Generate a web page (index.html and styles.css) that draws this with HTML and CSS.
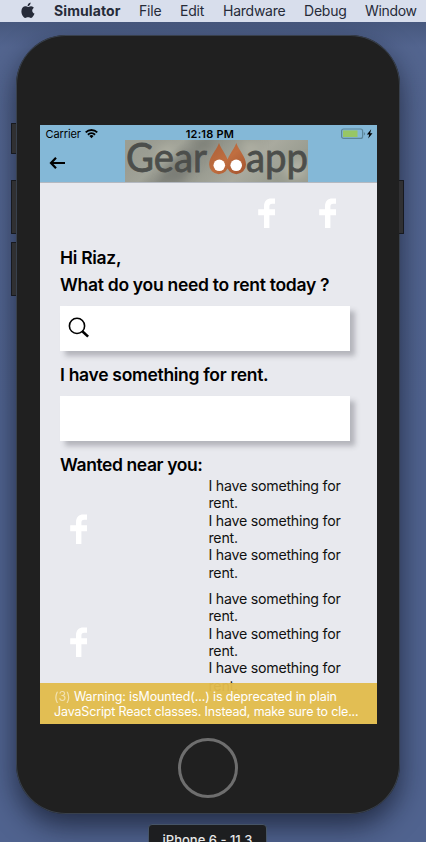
FILE: index.html
```html
<!DOCTYPE html>
<html lang="en">
<head>
<meta charset="utf-8">
<title>Simulator</title>
<link rel="stylesheet" href="styles.css">
</head>
<body>
<svg class="defs" width="0" height="0"><defs>
<symbol id="fb" viewBox="0 0 17 30"><path d="M6 30V17.200H.2v-5.900H6V8.400C6 3.200 9 .6 13.200.6H17v5.200h-2.700c-2.200 0-2.900 1-2.900 2.900v2.600H17v5.900h-5.600V30z" fill="#fff"/></symbol>
</defs></svg>
<nav class="menubar">
<svg class="apple" viewBox="0 0 14 17"><path d="M9.600.5C9.800 2.400 8.200 4.200 6.600 4.200 6.300 2.500 7.900.8 9.600.5zM6.900 5c.7 0 1.700-.9 3.300-.8 1.200.1 2.100.6 2.700 1.500-2.500 1.600-2 4.900.6 5.900-.6 1.800-2 4.300-3.500 4.300-1.100 0-1.500-.7-2.900-.7s-1.800.7-2.900.7C2.500 15.900.4 12.500.4 9.300c0-3.200 2-5 4-5 1.100 0 1.900.7 2.500.7z" fill="#262b39"/></svg>
<span class="m app">Simulator</span><span class="m file">File</span><span class="m edit">Edit</span><span class="m hw">Hardware</span><span class="m debug">Debug</span><span class="m win">Window</span>
</nav>
<main class="desktop">
<div class="phone">
<i class="key k1"></i><i class="key k2"></i><i class="key k3"></i><i class="key k4"></i>
<div class="screen">
<header class="header">
<div class="status">
<span class="carrier">Carrier</span>
<svg class="wifi" viewBox="0 0 13 9.500"><g fill="none" stroke="#000" stroke-width="1.900"><path d="M.7 3.400a8.300 8.300 0 0 1 11.600 0"/><path d="M2.900 5.700a5.200 5.200 0 0 1 7.200 0"/></g><path d="M4.400 7.100a3 3 0 0 1 4.200 0L6.500 9.200z"/></svg>
<span class="time">12:18 PM</span>
<svg class="battery" viewBox="0 0 33 12"><rect x=".6" y="1" width="21" height="9.400" rx="2" fill="none" stroke="#5c8599" stroke-width="1.200"/><rect x="2" y="2.400" width="14.500" height="6.600" fill="#97c665"/><path d="M22.800 4a1.900 1.900 0 0 1 0 3.600z" fill="#5c8599"/><path d="M30.200 1.200l-4.300 5.200h2.400l-1.100 4 4.300-5.200h-2.400z"/></svg>
</div>
<div class="nav">
<svg class="back" viewBox="0 0 17 14"><path d="M7 1.800L2 7l5 5.200M2 7h14" fill="none" stroke="#000" stroke-width="2.200"/></svg>
<svg class="logo" viewBox="0 0 183 42"><defs>
<linearGradient id="st" x2="1" y2=".25"><stop stop-color="#9c9e92"/><stop offset=".15" stop-color="#9a9c92"/><stop offset=".3" stop-color="#a1a398"/><stop offset=".42" stop-color="#868880"/><stop offset=".6" stop-color="#9b9d92"/><stop offset=".78" stop-color="#a9aa9f"/><stop offset="1" stop-color="#999c90"/></linearGradient>
<filter id="soft" x="-20%" y="-20%" width="140%" height="140%"><feGaussianBlur stdDeviation="4"/></filter>
<linearGradient id="drop" x2="1" y2="1"><stop stop-color="#a95f38"/><stop offset=".5" stop-color="#c06e40"/><stop offset="1" stop-color="#a3532e"/></linearGradient></defs>
<rect width="183" height="42" fill="url(#st)"/>
<g filter="url(#soft)"><path d="M34 42L48 22l14-10 10 8-16 22z" fill="#7b7e77"/><path d="M118 2l18 4-14 12zM155 26l24-8 3 18-16 4zM30 10l20-6-6 16z" fill="#b0b1a4"/><path d="M62 0h28L80 11z" fill="#7f8279"/></g>
<g class="word"><text x="1" y="32" textLength="81" lengthAdjust="spacingAndGlyphs">Gear</text><text x="121" y="32" textLength="62" lengthAdjust="spacingAndGlyphs">app</text></g>
<path d="M94 3c3 8 9.500 14 9.500 21.500a9.700 9.700 0 0 1-19.400 0C84.100 17 91 11 94 3zM111.300 3c3 8 9.700 14 9.700 21.500a9.700 9.700 0 0 1-19.400 0C101.600 17 108.300 11 111.300 3z" fill="url(#drop)"/><circle cx="94.300" cy="25.300" r="5.800" fill="#fff"/><circle cx="111.200" cy="25.300" r="5.800" fill="#fff"/></svg>
</div>
</header>
<div class="social"><svg class="fb"><use href="#fb"/></svg><svg class="fb"><use href="#fb"/></svg></div>
<section class="body">
<h2><span class="h1">Hi Riaz,</span></h2>
<h2><span class="h2">What do you need to rent today ?</span></h2>
<div class="box"><svg class="search" viewBox="0 0 22 22"><circle cx="9" cy="8.900" r="7.600" fill="none" stroke="#000" stroke-width="1.600"/><path d="M14.300 14.300l5.800 5.300" stroke="#000" stroke-width="2.600"/></svg></div>
<h2><span class="h3">I have something for rent.</span></h2>
<div class="box"></div>
<h2 class="last"><span class="h4">Wanted near you:</span></h2>
<div class="item"><svg class="fb"><use href="#fb"/></svg><div class="copy"><p>I have something for<br>rent.</p><p>I have something for<br>rent.</p><p>I have something for<br>rent.</p></div></div>
<div class="item"><svg class="fb"><use href="#fb"/></svg><div class="copy"><p>I have something for<br>rent.</p><p>I have something for<br>rent.</p><p>I have something for<br>rent.</p></div></div>
</section>
<div class="warning"><div class="w1"><span class="count">(3)</span> Warning: isMounted(...) is deprecated in plain</div><div class="w2">JavaScript React classes. Instead, make sure to cle...</div></div>
</div>
<div class="home"></div>
</div>
<div class="device">iPhone 6 - 11.3</div>
</main>
</body>
</html>
```
FILE: styles.css
```css
* { box-sizing: border-box; }
body { margin: 0; width: 426px; height: 842px; overflow: hidden; font-family: Inter, "Liberation Sans", sans-serif; color: #000; background: #50638f; }
.defs { position: absolute; }
.menubar { height: 22px; background: #d8deec; display: flex; align-items: center; font-size: 14px; color: #262b39; white-space: nowrap; padding-left: 21px; }
.apple { width: 14px; height: 17px; flex: none; margin: 0 19px 1px 0; }
.m { flex: none; line-height: 22px; letter-spacing: -.2px; }
.app { font-weight: 700; width: 85px; letter-spacing: .1px; }
.file { width: 41px; }
.edit { width: 43px; }
.hw { width: 81px; letter-spacing: -.25px; }
.debug { width: 61px; }
.win { letter-spacing: -.35px; }
.desktop { height: 820px; padding-top: 13px; overflow: hidden; background: linear-gradient(#47587e, #53658f 25px, #50638f 400px, #50638f); }
.phone { position: relative; width: 384px; height: 778.500px; margin-left: 16px; padding: 90px 0 0 24px; border-radius: 50px; background: #202020; box-shadow: 0 0 0 1px #38404c inset, 0 12px 28px rgba(10, 15, 30, .65); }
.key { position: absolute; width: 5px; background: #303032; border: 1px solid #17191e; border-right: 0; left: -5px; height: 54px; border-radius: 1px 0 0 1px; }
.k1 { top: 88px; height: 31px; }
.k2 { top: 145px; }
.k3 { top: 207px; }
.k4 { top: 145px; left: 383px; width: 5px; border: 1px solid #17191e; border-left: 0; border-radius: 0 1px 1px 0; }
.screen { position: relative; width: 337px; height: 599px; background: #e8e9ee; overflow: hidden; }
.header { height: 58px; background: #84b8d7; border-bottom: 1px solid #b4b9c1; }
.status { height: 15px; display: flex; align-items: center; font-size: 11px; line-height: 18px; padding: 3px 3px 0 5.500px; white-space: nowrap; }
.carrier { width: 40px; letter-spacing: -.1px; }
.wifi { width: 13px; height: 9.500px; }
.time { font-weight: 600; width: 156px; margin-left: 87.500px; letter-spacing: .2px; }
.battery { width: 33px; height: 12px; flex: none; }
.nav { height: 42px; display: flex; align-items: center; padding-left: 9px; }
.back { width: 17px; height: 14px; margin: 3px 59px 0 0; }
.logo { width: 183px; height: 42px; display: block; }
.word { font-family: Lato, sans-serif; font-weight: 400; font-size: 41px; fill: #4c4e4b; stroke: #4c4e4b; stroke-width: .8px; }
.social { height: 62px; padding: 15px 41px 0 0; display: flex; justify-content: flex-end; gap: 44px; }
.fb { width: 17px; height: 30px; flex: none; display: block; }
.body { padding: 0 27px 0 20px; }
h2 { margin: 0; height: 27px; padding-top: 2px; font-size: 17.500px; line-height: 22px; font-weight: 600; white-space: nowrap; letter-spacing: -.29px; }
.h3 { letter-spacing: -.3px; }
.h4 { letter-spacing: -.4px; }
.last { height: 25px; }
.box { height: 45px; width: 290px; background: #fff; box-shadow: 5px 5px 5px rgba(60, 60, 70, .3); margin: 7px 0 11px; padding: 10.500px 0 0 8px; }
.search { width: 22px; height: 22px; display: block; }
.item { height: 104px; margin-bottom: 9px; display: flex; align-items: center; padding-left: 10px; }
.copy { margin-left: 121.500px; font-size: 14.200px; line-height: 17.330px; color: #111; white-space: nowrap; letter-spacing: -.24px; }
.copy p { margin: 0; }
.warning { position: absolute; left: 0; right: 0; bottom: 0; height: 41.500px; padding: 6px 14px; background: rgba(226, 187, 76, .96); color: #fff; font-size: 12.500px; line-height: 15.500px; white-space: nowrap; letter-spacing: -.11px; }
.w2 { letter-spacing: -.16px; }
.count { opacity: .55; }
.home { width: 60px; height: 60px; border: 3px solid #6e6e6e; border-radius: 50%; margin: 14px 0 0 138px; }
.device { position: relative; width: 119px; height: 30px; margin: 10.500px 0 0 148px; background: #1d1e20; border: 1px solid #465466; border-radius: 4px; color: #e8e8e8; font-size: 13px; font-weight: 500; line-height: 31px; text-align: center; }
```
